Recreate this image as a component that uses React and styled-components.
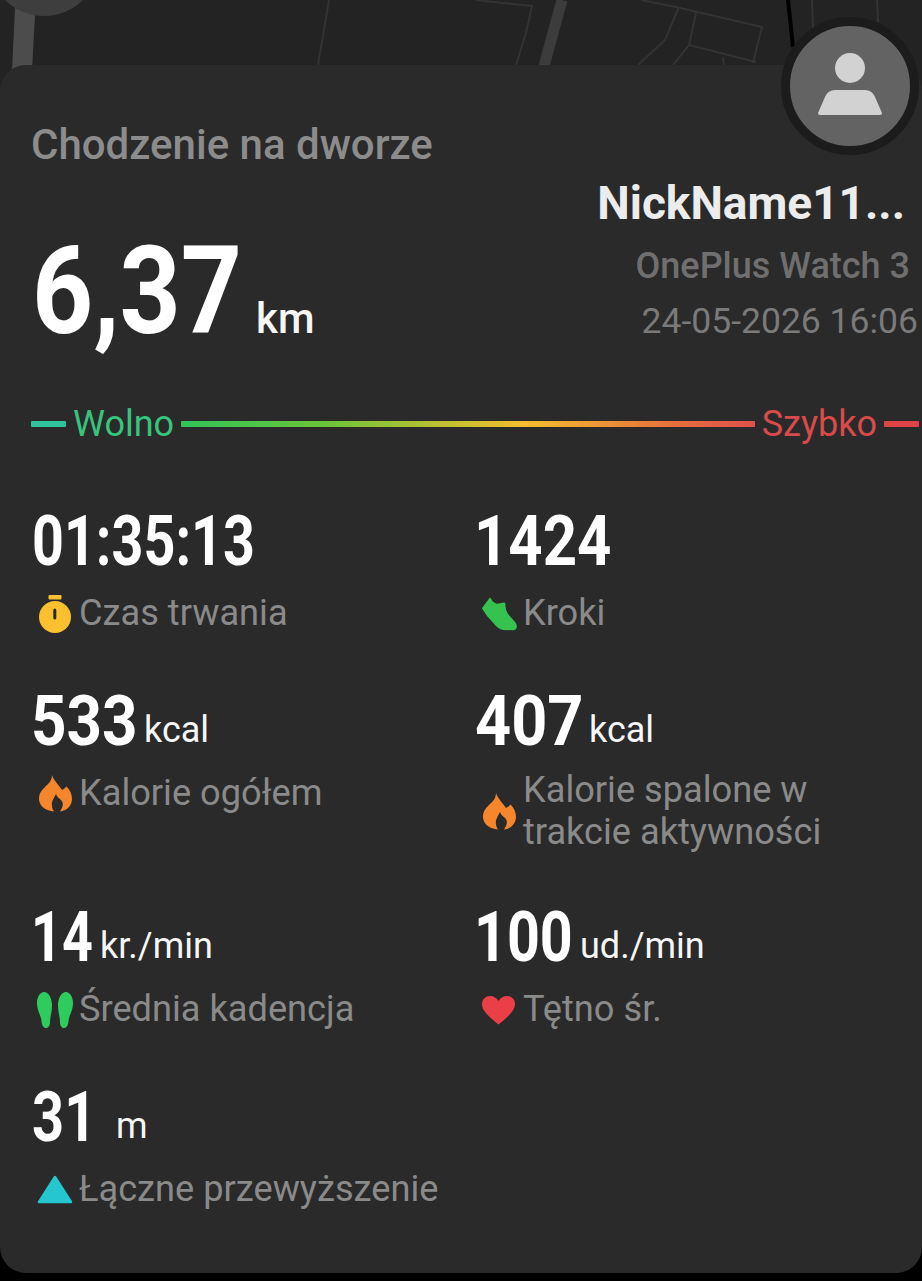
import React from "react";
import styled, { createGlobalStyle } from "styled-components";

const Global = createGlobalStyle`
  html, body {
    margin: 0;
    padding: 0;
    background: #000;
  }
  body {
    font-family: Roboto, "Noto Sans", sans-serif;
  }
`;

const Page = styled.div`
  position: relative;
  width: 922px;
  height: 1281px;
  overflow: hidden;
  background: #000;
`;

const MapBack = styled.svg`
  position: absolute;
  left: 0;
  top: 0;
  width: 922px;
  height: 110px;
  background: #232323;
`;

const Card = styled.div`
  position: relative;
  margin-top: 65px;
  height: 1208px;
  box-sizing: border-box;
  padding: 58px 0 0 32px;
  background: #2a2a2a;
  border-radius: 26px;
`;

const Avatar = styled.div`
  position: absolute;
  top: -48px;
  right: 3px;
  width: 138px;
  height: 138px;
  box-sizing: border-box;
  border: 9px solid #1c1c1c;
  border-radius: 50%;
  background: #636363;
  display: flex;
  align-items: center;
  justify-content: center;
`;

const Title = styled.div`
  font-size: 42px;
  line-height: 44px;
  font-weight: 500;
  color: #8c8c8c;
  margin-left: -1px;
`;

const Head = styled.div`
  display: flex;
  justify-content: space-between;
  height: 237px;
`;

const Distance = styled.div`
  display: flex;
  align-items: baseline;
  gap: 19px;
  margin-top: 64px;
  height: 122px;
`;

const Digits = styled.span`
  display: inline-block;
  width: ${(p) => p.$w}px;
  margin-left: ${(p) => p.$nudge || 0}px;
  white-space: nowrap;
  font-weight: 700;
  font-size: ${(p) => p.$size}px;
  line-height: 1;
  color: #fff;
  transform: scaleX(${(p) => p.$scale});
  transform-origin: left center;
`;

const Info = styled.div`
  display: flex;
  flex-direction: column;
  align-items: flex-end;
  margin-top: 8px;
`;

const Nick = styled.div`
  font-size: 46px;
  line-height: 56px;
  font-weight: 700;
  color: #ececec;
  margin-right: 17px;
  margin-bottom: 8px;
`;

const Device = styled.div`
  font-size: 36px;
  line-height: 55px;
  font-weight: 500;
  color: #6f6f6f;
  margin-right: 12px;
`;

const Stamp = styled.div`
  font-size: 35.5px;
  line-height: 55px;
  color: #7a7a7a;
  margin-right: 4px;
`;

const Pace = styled.div`
  display: flex;
  align-items: center;
  gap: 7px;
  height: 40px;
  margin-right: 3px;
  margin-left: -1px;
  font-size: 36px;
`;

const PaceLine = styled.div`
  height: 6px;
  border-radius: 1px;
  width: ${(p) => (p.$grow ? "auto" : "35px")};
  flex: ${(p) => (p.$grow ? 1 : "none")};
  background: ${(p) => p.$bg};
`;

const PaceLabel = styled.span`
  color: ${(p) => p.$color};
`;

const Stats = styled.div`
  display: grid;
  grid-template-columns: 444px 1fr;
  grid-template-rows: 180px 216px 180px 180px;
  margin-top: 62px;
`;

const Stat = styled.div`
  display: flex;
  flex-direction: column;
`;

const ValueRow = styled.div`
  display: flex;
  align-items: baseline;
  gap: ${(p) => p.$gap || 9}px;
  height: 72px;
`;

const Unit = styled.span`
  font-size: 36px;
  font-weight: 400;
  color: #f6f6f6;
  transform: translateY(-3px);
`;

const BigUnit = styled.span`
  font-size: 42px;
  font-weight: 500;
  color: #f6f6f6;
`;

const LabelRow = styled.div`
  display: flex;
  align-items: center;
  gap: 7px;
  margin-top: ${(p) => (p.$wrapped ? 11 : 14)}px;
  font-size: 36.2px;
  line-height: 42px;
  color: #8a8a8a;
`;

const IconBox = styled.svg`
  width: 40px;
  height: 40px;
  flex: none;
  overflow: visible;
`;

const LabelText = styled.span`
  white-space: pre-line;
`;

const Timer = () => (
  <IconBox viewBox="0 0 40 40">
    <rect x="16.5" y="2" width="13" height="4.5" rx="1" fill="#fbc02d" />
    <circle cx="23" cy="24" r="16" fill="#fbc02d" />
    <rect x="21.3" y="15.5" width="3" height="11" rx="1.5" fill="#2a2a2a" />
  </IconBox>
);

const Shoe = () => (
  <IconBox viewBox="0 0 40 40">
    <path
      d="M6 15.5 Q6 15 6.5 14.5 L13.5 5 Q14.5 4.5 15 5.5 Q17 10 21 10.7 L28 9.5 Q29.5 9.5 29.5 11 Q29 16 32 21 L39.5 29.5 Q42 33 40 36 Q39 37.2 37 37.2 L27 37 Q22 36 17.3 30 L11 23 Z"
      fill="#35c24f"
    />
  </IconBox>
);

const Flame = () => (
  <IconBox viewBox="0 0 40 40">
    <path
      d="M20 2 C22 8 27 12 30 17 C32 16 33 15 34.5 13.5 C38 17 40 21 40 26 C40 33 34 38 28 38.5 C31 34 32 30 29 27 C27 25 25 24 24 21 C22 25 19 29 20 33 C20 35 21 37 22 38.5 C14 38 7 33 7 26 C7 20 10 17 13 14 C16 11 20 8 20 2 Z"
      fill="#f5862c"
    />
  </IconBox>
);

const Feet = () => (
  <IconBox viewBox="0 0 40 40">
    <path
      d="M12 3 C17 3 20 10 20 16 C20 23 18 28 18 33 C18 37 16 39 14 39 C11 39 10 36 9.5 32 C9 26 5 22 5 14 C5 8 8 3 12 3 Z"
      fill="#2ecc5c"
    />
    <path
      d="M34 3 C29 3 26 10 26 16 C26 23 28 28 28 33 C28 37 30 39 32 39 C35 39 36 36 36.5 32 C37 26 41 22 41 14 C41 8 38 3 34 3 Z"
      fill="#2ecc5c"
    />
  </IconBox>
);

const Heart = () => (
  <IconBox viewBox="0 0 40 40">
    <path
      d="M22.5 35.5 C12 27 6 21.5 6 15 C6 10 10 7 14 7 C17.5 7 21 9 22.5 12 C24 9 27.5 7 31 7 C35 7 39 10 39 15 C39 21.5 33 27 22.5 35.5 Z"
      fill="#ea3f47"
    />
  </IconBox>
);

const Climb = () => (
  <IconBox viewBox="0 0 40 40">
    <path d="M23 8 L39 33 H7 Z" fill="#25c6cf" stroke="#25c6cf" strokeWidth="2.5" strokeLinejoin="round" />
  </IconBox>
);

const stats = [
  { value: "01:35:13", w: 222, scale: 0.795, label: "Czas trwania", icon: <Timer /> },
  { value: "1424", w: 134, scale: 0.855, nudge: -2, label: "Kroki", icon: <Shoe /> },
  { value: "533", w: 104, scale: 0.885, nudge: -1, unit: "kcal", label: "Kalorie ogółem", icon: <Flame /> },
  { value: "407", w: 105, scale: 0.9, nudge: -1, unit: "kcal", wrapped: true, label: "Kalorie spalone w\ntrakcie aktywności", icon: <Flame /> },
  { value: "14", w: 60, scale: 0.77, nudge: -1, unit: "kr./min", label: "Średnia kadencja", icon: <Feet /> },
  { value: "100", w: 97, scale: 0.82, nudge: -2, unit: "ud./min", label: "Tętno śr.", icon: <Heart /> },
  { value: "31", w: 59, scale: 0.8, unit: "m", gap: 25, label: "Łączne przewyższenie", icon: <Climb /> },
];

export default function App() {
  return (
    <Page>
      <Global />
      <MapBack viewBox="0 0 922 110">
        <path d="M15 8 L35 15 L32 70 L12 70 Z" fill="#4c4c4c" />
        <circle cx="44" cy="-39.5" r="55.5" fill="#3e3e3e" />
        <path d="M562 0 L544 66" stroke="#3c3c3c" strokeWidth="11" fill="none" />
        <path
          d="M329 0 L318 65 M476 0 L532 6 L526 33 L516 65 M641 0 L676 7 L762 27 L753 63 M679 7 L665 40 L638 65 M696 13 L689 45 L673 65 M689 45 L756 62 M723 57 L724 65 M812 0 L813 28 M877 0 L878 22"
          stroke="#333"
          strokeWidth="2"
          fill="none"
        />
        <path d="M788 0 L793 47" stroke="#000" strokeWidth="4" fill="none" />
      </MapBack>
      <Card>
        <Avatar>
          <svg width="70" height="66" viewBox="0 0 70 66">
            <circle cx="35" cy="15" r="15" fill="#d2d2d2" />
            <path d="M20 37 H50 Q57 37 60 44 L67 60 Q67 62 65 62 H5 Q3 62 3 60 L10 44 Q13 37 20 37 Z" fill="#d2d2d2" />
          </svg>
        </Avatar>
        <Title>Chodzenie na dworze</Title>
        <Head>
          <Distance>
            <Digits $size={122} $w={205} $scale={0.875}>6,37</Digits>
            <BigUnit>km</BigUnit>
          </Distance>
          <Info>
            <Nick>NickName11...</Nick>
            <Device>OnePlus Watch 3</Device>
            <Stamp>24-05-2026 16:06</Stamp>
          </Info>
        </Head>
        <Pace>
          <PaceLine $bg="#2fc49a" />
          <PaceLabel $color="#36c47e">Wolno</PaceLabel>
          <PaceLine $grow $bg="linear-gradient(90deg, #2fc45a 0%, #6cc437 25%, #f4be2c 60%, #e8703c 85%, #e0504a 100%)" />
          <PaceLabel $color="#d94a4a">Szybko</PaceLabel>
          <PaceLine $bg="#e04347" />
        </Pace>
        <Stats>
          {stats.map((s) => (
            <Stat key={s.label}>
              <ValueRow $gap={s.gap}>
                <Digits $size={70} $w={s.w} $scale={s.scale} $nudge={s.nudge}>{s.value}</Digits>
                {s.unit && <Unit>{s.unit}</Unit>}
              </ValueRow>
              <LabelRow $wrapped={s.wrapped}>
                {s.icon}
                <LabelText>{s.label}</LabelText>
              </LabelRow>
            </Stat>
          ))}
        </Stats>
      </Card>
    </Page>
  );
}
